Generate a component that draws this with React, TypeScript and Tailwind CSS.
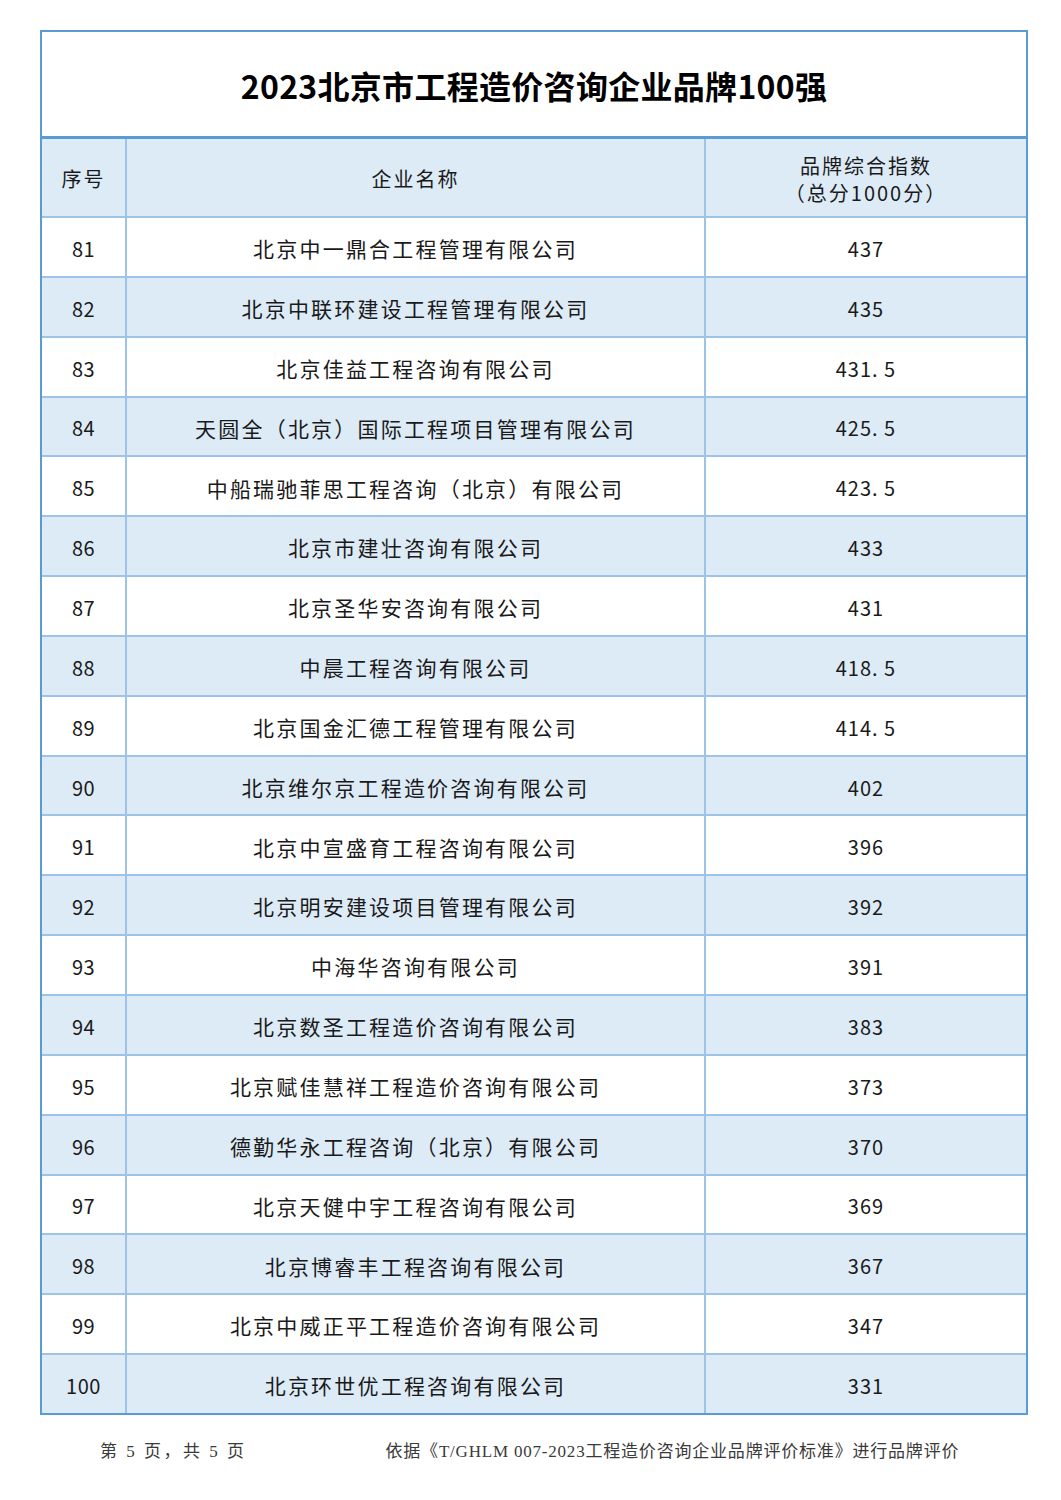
const rows: [string, string, string][] = [
  ["81", "北京中一鼎合工程管理有限公司", "437"],
  ["82", "北京中联环建设工程管理有限公司", "435"],
  ["83", "北京佳益工程咨询有限公司", "431. 5"],
  ["84", "天圆全（北京）国际工程项目管理有限公司", "425. 5"],
  ["85", "中船瑞驰菲思工程咨询（北京）有限公司", "423. 5"],
  ["86", "北京市建壮咨询有限公司", "433"],
  ["87", "北京圣华安咨询有限公司", "431"],
  ["88", "中晨工程咨询有限公司", "418. 5"],
  ["89", "北京国金汇德工程管理有限公司", "414. 5"],
  ["90", "北京维尔京工程造价咨询有限公司", "402"],
  ["91", "北京中宣盛育工程咨询有限公司", "396"],
  ["92", "北京明安建设项目管理有限公司", "392"],
  ["93", "中海华咨询有限公司", "391"],
  ["94", "北京数圣工程造价咨询有限公司", "383"],
  ["95", "北京赋佳慧祥工程造价咨询有限公司", "373"],
  ["96", "德勤华永工程咨询（北京）有限公司", "370"],
  ["97", "北京天健中宇工程咨询有限公司", "369"],
  ["98", "北京博睿丰工程咨询有限公司", "367"],
  ["99", "北京中威正平工程造价咨询有限公司", "347"],
  ["100", "北京环世优工程咨询有限公司", "331"]
];

export default function App() {
  return (
    <div className="min-h-[1500px] w-[1061px] bg-white pt-[30px] font-['Noto_Sans_CJK_SC','Noto_Sans',sans-serif] text-[#1a1a1a]">
      <div className="ml-[40px] w-[988px] border-2 border-[#5b9bd5]">
        <div className="flex h-[107px] items-center justify-center border-b-[3px] border-[#5b9bd5] pt-[2px]">
          <h1 className="text-[32px] font-bold tracking-[0.3px] text-black">
            2023北京市工程造价咨询企业品牌100强
          </h1>
        </div>
        <div className="grid h-[79px] grid-cols-[85px_579px_1fr] border-b-2 border-[#9dc3e6] bg-[#ddebf7] text-[20px] tracking-[2px]">
          <div className="flex items-center justify-center border-r-2 border-[#9dc3e6] pt-[3px]">序号</div>
          <div className="flex items-center justify-center border-r-2 border-[#9dc3e6] pt-[3px]">企业名称</div>
          <div className="flex flex-col items-center justify-center pt-[2px] leading-[27px]">
            <span>品牌综合指数</span>
            <span>（总分1000分）</span>
          </div>
        </div>
        {rows.map(([no, name, score], i) => (
          <div
            key={no}
            className={
              "grid grid-cols-[85px_579px_1fr] text-[20px] " +
              (i % 2 === 1 ? "bg-[#ddebf7] " : "bg-white ") +
              (i === rows.length - 1 ? "h-[57.5px]" : "h-[59.85px] border-b-2 border-[#9dc3e6]")
            }
          >
            <div className="flex items-center justify-center border-r-2 border-[#9dc3e6] pt-[4px] tracking-[0.5px]">{no}</div>
            <div className="flex items-center justify-center border-r-2 border-[#9dc3e6] pt-[4px] text-[21px] tracking-[2.2px]">{name}</div>
            <div className="flex items-center justify-center pt-[4px] tracking-[1px]">{score}</div>
          </div>
        ))}
      </div>
      <div className="mt-[24px] flex font-['Liberation_Serif','Noto_Sans_CJK_SC',serif] text-[17px] text-[#3a3a3a]">
        <span className="ml-[100px] tracking-[2.5px]">第 5 页，共 5 页</span>
        <span className="ml-[139px] tracking-[0.8px]">
          依据《T/GHLM 007-2023工程造价咨询企业品牌评价标准》进行品牌评价
        </span>
      </div>
    </div>
  );
}
